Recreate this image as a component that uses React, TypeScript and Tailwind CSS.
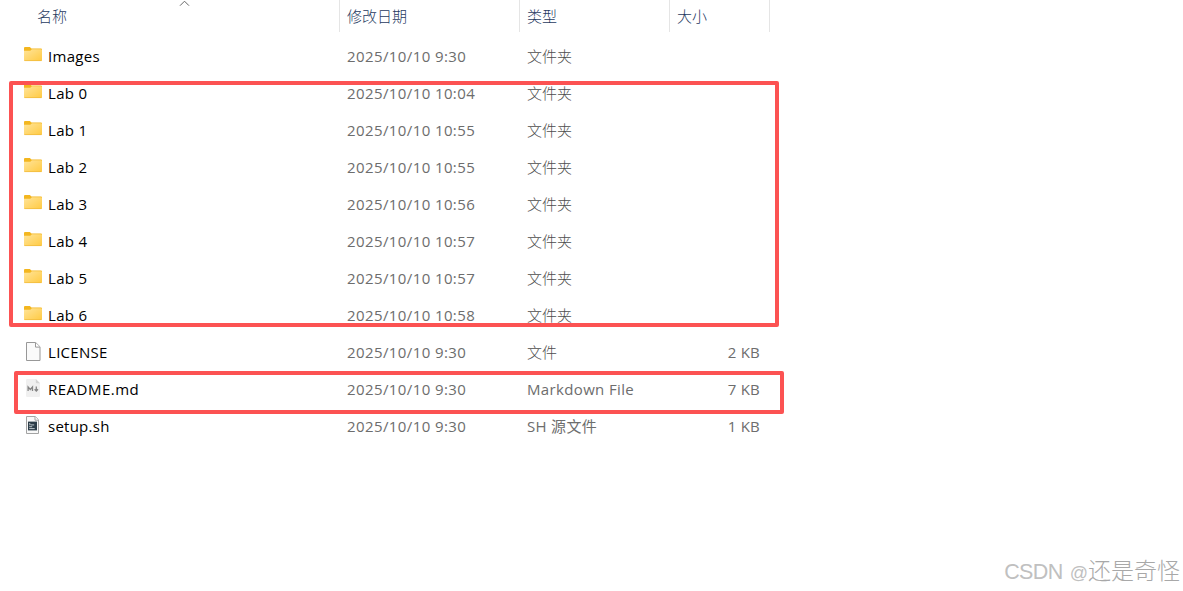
type FileKind = "folder" | "blank" | "markdown" | "shell";

type Entry = {
  name: string;
  modified: string;
  type: string;
  size?: string;
  kind: FileKind;
};

const entries: Entry[] = [
  { name: "Images", modified: "2025/10/10 9:30", type: "文件夹", kind: "folder" },
  { name: "Lab 0", modified: "2025/10/10 10:04", type: "文件夹", kind: "folder" },
  { name: "Lab 1", modified: "2025/10/10 10:55", type: "文件夹", kind: "folder" },
  { name: "Lab 2", modified: "2025/10/10 10:55", type: "文件夹", kind: "folder" },
  { name: "Lab 3", modified: "2025/10/10 10:56", type: "文件夹", kind: "folder" },
  { name: "Lab 4", modified: "2025/10/10 10:57", type: "文件夹", kind: "folder" },
  { name: "Lab 5", modified: "2025/10/10 10:57", type: "文件夹", kind: "folder" },
  { name: "Lab 6", modified: "2025/10/10 10:58", type: "文件夹", kind: "folder" },
  { name: "LICENSE", modified: "2025/10/10 9:30", type: "文件", size: "2 KB", kind: "blank" },
  { name: "README.md", modified: "2025/10/10 9:30", type: "Markdown File", size: "7 KB", kind: "markdown" },
  { name: "setup.sh", modified: "2025/10/10 9:30", type: "SH 源文件", size: "1 KB", kind: "shell" },
];

// letter spacing for the name and type columns
const nameStyles: Record<FileKind, string> = {
  folder: "tracking-[0.3px]",
  blank: "tracking-[0.3px]",
  markdown: "tracking-[0.5px]",
  shell: "tracking-[0.25px]",
};

const typeStyles: Record<FileKind, string> = {
  folder: "font-light text-[#4d4d4d]",
  blank: "font-light text-[#4d4d4d]",
  markdown: "tracking-[0.35px]",
  shell: "tracking-[0.3px]",
};

const iconOffsets: Record<FileKind, string> = {
  folder: "-mt-[5px]",
  blank: "-mt-[1px]",
  markdown: "-mt-[1px]",
  shell: "-mt-[1px]",
};

function FolderIcon() {
  return (
    <svg width="20" height="20" viewBox="0 0 20 20">
      <defs>
        <linearGradient id="folder" x1="0" y1="0" x2="1" y2="1">
          <stop offset="0" stopColor="#ffe49a" />
          <stop offset="1" stopColor="#ffca42" />
        </linearGradient>
      </defs>
      <path d="M1 4a1 1 0 0 1 1-1h4.8l1.7 1.5H18a1 1 0 0 1 1 1V10H1z" fill="#f3b61f" />
      <path d="M1 6.7h6.3l1.6-1.5H18a1 1 0 0 1 1 1v9.8a1 1 0 0 1-1 1H2a1 1 0 0 1-1-1z" fill="url(#folder)" />
      <path d="M1.3 16.6h17.4" stroke="#efb93a" strokeWidth=".7" />
    </svg>
  );
}

function BlankIcon() {
  return (
    <svg width="20" height="20" viewBox="0 0 20 20">
      <path d="M3.5.5h9.2l4.3 4.3v13.7H3.5z" fill="#fafafa" stroke="#989898" />
      <path d="M12.5.8v4.3h4.3" fill="#fff" stroke="#989898" />
    </svg>
  );
}

function MarkdownIcon() {
  return (
    <svg width="20" height="20" viewBox="0 0 20 20">
      <path d="M4.2 0h8.6L17 4.2v12.6a1.2 1.2 0 0 1-1.2 1.2H4.2A1.2 1.2 0 0 1 3 16.8V1.2A1.2 1.2 0 0 1 4.2 0z" fill="#f0f0f0" />
      <path d="M12.8 0v3.2a1 1 0 0 0 1 1H17z" fill="#d4d4d4" />
      <path d="M5.1 12V8l2.2 2.5L9.5 8v4M13.3 7.5v4M11.6 10.2l1.7 1.8 1.7-1.8" fill="none" stroke="#858585" strokeWidth="1.3" />
    </svg>
  );
}

function ShellIcon() {
  return (
    <svg width="20" height="20" viewBox="0 0 20 20">
      <path d="M3.5.5h8.7l3.3 3.3v13.7h-12z" fill="#f8f8f8" stroke="#a3a3a3" />
      <path d="M12 .8v3.4h3.4" fill="#fff" stroke="#a3a3a3" />
      <path d="M5 5.6h9v8.8H5z" fill="#2d3d48" />
      <path d="M6.2 7.4l1.2.8-1.2.8M7.6 8.9h3.6M6.2 10.7h3M6.2 12.6h5.5" fill="none" stroke="#d0d8dc" strokeWidth=".9" />
    </svg>
  );
}

const icons = {
  folder: FolderIcon,
  blank: BlankIcon,
  markdown: MarkdownIcon,
  shell: ShellIcon,
};

function Header() {
  return (
    <header className="flex h-8 text-[15px] leading-8 font-light text-[#1f3a5f]">
      <div className="relative w-[340px] border-r border-[#e5e5e5] pl-[37px]">
        名称
        <svg className="absolute top-0 left-[179px]" width="11" height="7" viewBox="0 0 11 7">
          <path d="M1 5.7L5.5 1.2 10 5.7" fill="none" stroke="#666" />
        </svg>
      </div>
      <div className="w-[180px] border-r border-[#e5e5e5] pl-[7px]">修改日期</div>
      <div className="w-[150px] border-r border-[#e5e5e5] pl-[7px]">类型</div>
      <div className="w-[100px] border-r border-[#e5e5e5] pl-[7px]">大小</div>
    </header>
  );
}

function Row({ entry }: { entry: Entry }) {
  const Icon = icons[entry.kind];
  return (
    <li className="flex h-[37px] w-[770px] items-center text-[15px] text-[#6d6d6d]">
      <div className="flex w-[340px] items-center pl-[23px] text-black">
        <span className={`mr-[5px] h-5 w-5 shrink-0 ${iconOffsets[entry.kind]}`}>
          <Icon />
        </span>
        <span className={nameStyles[entry.kind]}>{entry.name}</span>
      </div>
      <div className="w-[180px] pl-[7px] tracking-[0.4px]">{entry.modified}</div>
      <div className={`w-[150px] pl-[7px] ${typeStyles[entry.kind]}`}>{entry.type}</div>
      <div className="w-[90px] text-right tracking-[0.2px]">{entry.size}</div>
    </li>
  );
}

export default function App() {
  return (
    <main className="relative h-[591px] w-[1183px] overflow-hidden bg-white font-['Open_Sans','Noto_Sans_CJK_SC',sans-serif]">
      <Header />
      <ul className="pt-[6px]">
        {entries.map((entry) => (
          <Row key={entry.name} entry={entry} />
        ))}
      </ul>
      <div className="absolute top-[81px] left-[9px] h-[246px] w-[770px] rounded-[2px] border-4 border-[#fc5252]" />
      <div className="absolute top-[371px] left-[14px] h-[43px] w-[770px] rounded-[2px] border-4 border-[#fc5252]" />
      <div className="absolute right-[3px] bottom-[2px] flex items-baseline font-['Liberation_Sans','Noto_Sans_CJK_SC',sans-serif] leading-8 whitespace-nowrap text-[#c0c0c0]">
        <span className="mr-[7px] text-[21.5px] tracking-[-0.6px]">CSDN</span>
        <span className="text-[18px]">@</span>
        <span className="text-[23px] font-light text-[#a8a8a8]">还是奇怪</span>
      </div>
    </main>
  );
}
